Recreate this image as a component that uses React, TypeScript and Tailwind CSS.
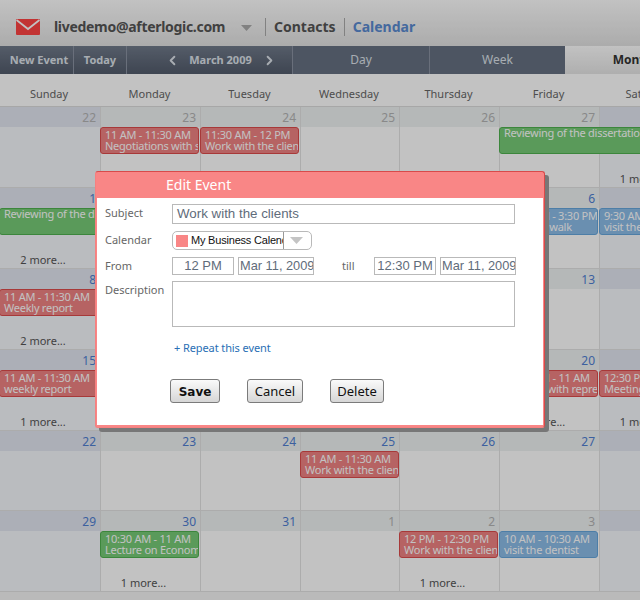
import { ChevronLeft, ChevronRight } from "lucide-react";

type CalEvent = {
  time?: string;
  title: string;
  color: "red" | "green" | "blue";
  wide?: boolean;
};

type Day = {
  n: number;
  muted?: boolean;
  event?: CalEvent;
  more?: string;
};

const WEEKDAYS = ["Sunday", "Monday", "Tuesday", "Wednesday", "Thursday", "Friday", "Saturday"];

const eventColors = {
  red: "bg-[#f08383] border-[#dc4c4c]",
  green: "bg-[#77cb77] border-[#50b050]",
  blue: "bg-[#8cbce8] border-[#66a6dc]",
};

const red = (time: string, title: string): CalEvent => ({ time, title, color: "red" });

const WEEKS: { rowClass: string; days: Day[] }[] = [
  {
    rowClass: "h-[81px]",
    days: [
      { n: 22, muted: true },
      { n: 23, muted: true, event: red("11 AM - 11:30 AM", "Negotiations with suppliers") },
      { n: 24, muted: true, event: red("11:30 AM - 12 PM", "Work with the clients") },
      { n: 25, muted: true },
      { n: 26, muted: true },
      { n: 27, muted: true, event: { title: "Reviewing of the dissertation", color: "green", wide: true } },
      { n: 28, muted: true, more: "1 more..." },
    ],
  },
  {
    rowClass: "h-[81px]",
    days: [
      { n: 1, event: { title: "Reviewing of the dissertation", color: "green", wide: true }, more: "2 more..." },
      { n: 2 },
      { n: 3 },
      { n: 4 },
      { n: 5 },
      { n: 6, event: { time: "12:30 PM - 3:30 PM", title: "Morning walk", color: "blue" } },
      { n: 7, event: { time: "9:30 AM - 10 AM", title: "visit the dentist", color: "blue" } },
    ],
  },
  {
    rowClass: "h-[81px]",
    days: [
      { n: 8, event: red("11 AM - 11:30 AM", "Weekly report"), more: "2 more..." },
      { n: 9 },
      { n: 10 },
      { n: 11 },
      { n: 12 },
      { n: 13 },
      { n: 14 },
    ],
  },
  {
    rowClass: "h-[81px]",
    days: [
      { n: 15, event: red("11 AM - 11:30 AM", "weekly report"), more: "1 more..." },
      { n: 16 },
      { n: 17 },
      { n: 18 },
      { n: 19 },
      { n: 20, event: red("10:30 AM - 11 AM", "Meeting with representatives"), more: "1 more..." },
      { n: 21, event: red("12:30 PM - 1 PM", "Meeting"), more: "1 more..." },
    ],
  },
  {
    rowClass: "h-[80px]",
    days: [
      { n: 22 },
      { n: 23 },
      { n: 24 },
      { n: 25, event: red("11 AM - 11:30 AM", "Work with the clients") },
      { n: 26 },
      { n: 27 },
      { n: 28 },
    ],
  },
  {
    rowClass: "h-[81px]",
    days: [
      { n: 29 },
      { n: 30, event: { time: "10:30 AM - 11 AM", title: "Lecture on Economy", color: "green" }, more: "1 more..." },
      { n: 31 },
      { n: 1, muted: true },
      { n: 2, muted: true, event: red("12 PM - 12:30 PM", "Work with the clients"), more: "1 more..." },
      { n: 3, muted: true, event: { time: "10 AM - 10:30 AM", title: "visit the dentist", color: "blue" } },
      { n: 4, muted: true },
    ],
  },
];

const columns = "grid grid-cols-[101px_100px_100px_99px_100px_100px_100px] w-[700px]";

function EventChip({ event }: { event: CalEvent }) {
  return (
    <div
      className={`relative z-10 -ml-px h-[27px] overflow-hidden whitespace-nowrap rounded-[3px] border px-[4px] text-[11px] tracking-[-0.25px] text-white ${
        event.wide ? "w-[201px]" : "w-[99px]"
      } ${eventColors[event.color]}`}
    >
      {event.time && <div className="pt-[1px] leading-[12px]">{event.time}</div>}
      <div className="leading-[10px]">{event.title}</div>
    </div>
  );
}

function DayCell({ day, index }: { day: Day; index: number }) {
  const weekend = index === 0 || index === 6;
  return (
    <div className={`relative flex flex-col border-r border-b border-[#e2e2e2] ${weekend ? "bg-[#f5f7fc]" : "bg-white"}`}>
      <div
        className={`h-[20px] shrink-0 pr-[4px] pt-[2px] text-right text-[12px] leading-[18px] ${
          weekend ? "bg-[#e3e6f1]" : "bg-[#eef2f2]"
        } ${day.muted ? "text-[#b4b4b4]" : "text-[#4f7fd2]"}`}
      >
        {day.n}
      </div>
      {day.event && <EventChip event={day.event} />}
      {day.more && (
        <div className="absolute bottom-[1px] left-0 right-[14px] text-center text-[11px] leading-[14px] text-[#555]">
          {day.more}
        </div>
      )}
    </div>
  );
}

function FieldLabel({ children }: { children: string }) {
  return <div className="w-[67px] shrink-0 text-[11px] leading-[14px] text-[#666]">{children}</div>;
}

function TextBox({ value, className }: { value: string; className: string }) {
  return (
    <div
      className={`overflow-hidden whitespace-nowrap border border-[#b9b9b9] font-['Liberation_Sans',sans-serif] text-[#5f6c7a] ${className}`}
    >
      {value}
    </div>
  );
}

function DialogButton({ label, className }: { label: string; className: string }) {
  return (
    <button
      className={`h-[24px] rounded-[3px] border border-[#7b7b7b] bg-gradient-to-b from-[#fafafa] to-[#d6d6d6] pt-[1px] text-[#111] ${className}`}
    >
      {label}
    </button>
  );
}

function EditEventDialog() {
  return (
    <div className="absolute left-[95px] top-[171px] z-30 w-[450px] rounded-[3px] border border-[#d84a4a] border-b-[#f58080] border-l-[#f58080] bg-[#f98686] px-[1px] pb-[2px] shadow-[4px_4px_0_#777]">
      <div className="h-[26px] pl-[69px] text-[14px] leading-[26px] text-white">Edit Event</div>
      <div className="h-[227px] bg-white pl-[8px] pt-[6px]">
        <div className="flex">
          <div className="pt-[2px]">
            <FieldLabel>Subject</FieldLabel>
          </div>
          <TextBox value="Work with the clients" className="h-[20px] w-[343px] pl-[4px] text-[13.33px] leading-[18px]" />
        </div>

        <div className="mt-[7px] flex">
          <div className="pt-[2px]">
            <FieldLabel>Calendar</FieldLabel>
          </div>
          <div className="flex h-[19px] w-[140px] items-center rounded-[5px] border border-[#b9b9b9] pl-[3px]">
            <span className="h-[12px] w-[12px] shrink-0 bg-[#f98686]" />
            <span className="ml-[3px] w-[93px] overflow-hidden whitespace-nowrap border-r border-[#999] font-['Liberation_Sans',sans-serif] text-[11px] leading-[17px] tracking-[-0.2px] text-[#111]">
              My Business Calendar
            </span>
            <svg width="13" height="7" viewBox="0 0 13 7" className="ml-[6px]">
              <path d="M0 0h13L6.5 7z" fill="#c4c4c4" />
            </svg>
          </div>
        </div>

        <div className="mt-[7px] flex items-center">
          <FieldLabel>From</FieldLabel>
          <TextBox value="12 PM" className="h-[18px] w-[62px] text-center text-[13px] leading-[16px]" />
          <TextBox value="Mar 11, 2009" className="ml-[4px] h-[18px] w-[76px] pl-[1px] text-[12.8px] leading-[16px]" />
          <div className="w-[60px] pl-[28px] text-[11px] text-[#666]">till</div>
          <TextBox value="12:30 PM" className="h-[18px] w-[62px] text-center text-[13px] leading-[16px]" />
          <TextBox value="Mar 11, 2009" className="ml-[4px] h-[18px] w-[76px] pl-[1px] text-[12.8px] leading-[16px]" />
        </div>

        <div className="mt-[6px] flex">
          <div className="pt-[2px]">
            <FieldLabel>Description</FieldLabel>
          </div>
          <div className="h-[46px] w-[343px] border border-[#b9b9b9]" />
        </div>

        <div className="ml-[69px] mt-[14px] text-[11px] leading-[14px] tracking-[-0.1px] text-[#2a6fb5]">+ Repeat this event</div>

        <div className="ml-[65px] mt-[24px] flex">
          <DialogButton label="Save" className="w-[50px] font-['DejaVu_Sans',sans-serif] text-[12px] font-bold" />
          <DialogButton label="Cancel" className="ml-[27px] w-[56px] text-[13px]" />
          <DialogButton label="Delete" className="ml-[27px] w-[54px] text-[13px]" />
        </div>
      </div>
    </div>
  );
}

export default function App() {
  return (
    <div className="relative h-[600px] w-[640px] overflow-hidden bg-white font-['Noto_Sans',sans-serif]">
      <header className="flex h-[46px] items-center bg-gradient-to-b from-[#ffffff] to-[#e2e2e2] pl-[16px] pt-[6px]">
        <svg width="24" height="16" viewBox="0 0 24 16" className="mt-[2px]">
          <rect width="24" height="16" rx="1" fill="#ff4444" />
          <path d="M0.5 1 12 10 23.5 1" fill="none" stroke="#ffffff" strokeWidth="1.8" />
        </svg>
        <span className="ml-[14px] w-[171px] whitespace-nowrap text-[14px] font-bold tracking-[-0.3px] text-[#555]">
          livedemo@afterlogic.com
        </span>
        <svg width="11" height="6" viewBox="0 0 11 6" className="ml-[16px] mt-[3px]">
          <path d="M0 0h11L5.5 6z" fill="#aaa" />
        </svg>
        <span className="ml-[13px] mt-[1px] h-[18px] w-px bg-[#aaa]" />
        <span className="ml-[8px] text-[14px] font-bold text-[#555]">Contacts</span>
        <span className="ml-[8px] mt-[1px] h-[18px] w-px bg-[#aaa]" />
        <span className="ml-[8px] text-[14px] font-bold text-[#5a8ad0]">Calendar</span>
      </header>

      <nav className="flex h-[28px] w-[702px] bg-gradient-to-b from-[#707a8a] to-[#525b6b] text-[12px] leading-[28px] text-[#dde3ea]">
        <div className="w-[74px] border-r border-[#8a93a2] pl-[5px] text-center text-[11px] font-bold">New Event</div>
        <div className="w-[53px] border-r border-[#8a93a2] text-center text-[11px] font-bold">Today</div>
        <div className="flex w-[166px] items-center justify-center gap-[8px] border-r border-[#8a93a2] pl-[22px] text-[11px] font-bold">
          <ChevronLeft size={15} strokeWidth={3} />
          <span className="w-[66px] whitespace-nowrap text-center">March 2009</span>
          <ChevronRight size={15} strokeWidth={3} />
        </div>
        <div className="w-[137px] border-r border-[#8a93a2] bg-[#667081] text-center">Day</div>
        <div className="w-[135px] bg-[#667081] text-center">Week</div>
        <div className="w-[137px] bg-gradient-to-b from-[#ffffff] to-[#e6e6e6] pr-[2px] text-center font-bold text-[#333]">Month</div>
      </nav>

      <div className={`${columns} h-[33px] border-b border-[#dcdcdc]`}>
        {WEEKDAYS.map((name) => (
          <div key={name} className="pr-[3px] pt-[12px] text-center text-[11px] leading-[16px] text-[#666]">
            {name}
          </div>
        ))}
      </div>

      {WEEKS.map((week, w) => (
        <div key={w} className={`${columns} ${week.rowClass}`}>
          {week.days.map((day, i) => (
            <DayCell key={i} day={day} index={i} />
          ))}
        </div>
      ))}
      <div className="h-[10px] bg-[#f5f5f5]" />

      <div className="absolute inset-0 z-20 bg-black/[0.24]" />
      <EditEventDialog />
    </div>
  );
}
